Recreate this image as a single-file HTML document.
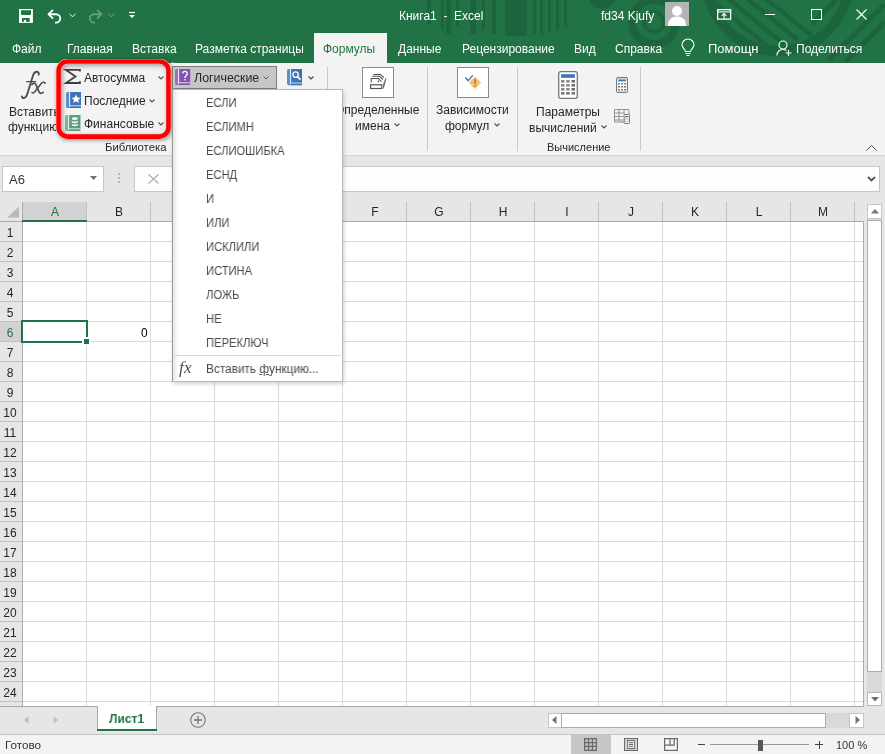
<!DOCTYPE html>
<html><head><meta charset="utf-8">
<style>
*{margin:0;padding:0;box-sizing:border-box}
html,body{width:885px;height:754px;overflow:hidden}
body{position:relative;font-family:"Liberation Sans",sans-serif;background:#fff;color:#262626}
.a{position:absolute;white-space:nowrap}
.t{position:absolute;white-space:nowrap;font-size:12px;line-height:12px;will-change:transform}
.w{color:#fff}
svg{position:absolute;overflow:visible}
</style></head><body>

<!-- TITLE BAR + TABS -->
<div class="a" style="left:0;top:0;width:885px;height:63px;background:#217346"></div>
<svg style="left:0;top:0" width="885" height="63" viewBox="0 0 885 63">
  <defs><clipPath id="cp"><rect x="0" y="0" width="885" height="63"/></clipPath><clipPath id="cp2"><circle cx="778" cy="-20" r="66"/></clipPath></defs>
  <g clip-path="url(#cp)" fill="#1c653c">
    <rect x="427" y="0" width="4" height="24"/>
    <rect x="441" y="0" width="3" height="30"/>
    <rect x="446" y="0" width="5" height="34"/>
    <rect x="456" y="0" width="3" height="26"/>
    <rect x="470" y="0" width="6" height="34"/>
    <rect x="482" y="0" width="3" height="30"/>
    <rect x="492" y="0" width="4" height="34"/>
    <rect x="505" y="0" width="22" height="36"/>
    <rect x="533" y="0" width="3" height="34"/>
    <rect x="540" y="0" width="3" height="34"/>
    <rect x="548" y="0" width="3" height="32"/>
    <rect x="556" y="0" width="3" height="30"/>
    <rect x="564" y="0" width="3" height="26"/>
    <circle cx="602" cy="-4" r="13"/>
  </g>
  <g clip-path="url(#cp)" fill="none" stroke="#1c653c">
    <circle cx="654" cy="22" r="10" stroke-width="4"/>
    <circle cx="654" cy="22" r="22" stroke-width="8"/>
    <circle cx="778" cy="-20" r="71" stroke-width="10"/>
    <path d="M836 0l-24 24M885 4l-56 56M885 22l-40 40" stroke-width="5"/>
  </g>
  <g clip-path="url(#cp2)" fill="none" stroke="#1c653c">
    <path d="M706 -4l64 52M720 -8l64 52M734 -12l64 52M748 -16l64 52" stroke-width="4.5"/>
  </g>
</svg>

<!-- QAT -->
<svg style="left:18px;top:8px" width="16" height="16" viewBox="0 0 16 16">
  <path d="M1 1h13.9v13.9H1z" fill="#fff"/>
  <path d="M3 2.3h10v3.9l-0.8 0.8H3.8L3 6.2z" fill="#217346"/>
  <rect x="4" y="10" width="7.7" height="3.9" fill="#217346"/>
  <rect x="5.9" y="11.9" width="2.3" height="2" fill="#fff"/>
</svg>
<svg style="left:47px;top:9px" width="16" height="14" viewBox="0 0 16 14">
  <path d="M6 0.8L1.6 5.2 6 9.6" fill="none" stroke="#fff" stroke-width="1.9"/>
  <path d="M1.6 5.2h7.4a4.2 4.2 0 0 1 0 8.4H8" fill="none" stroke="#fff" stroke-width="1.9"/>
</svg>
<svg style="left:69px;top:13px" width="7" height="5" viewBox="0 0 7 5"><path d="M0.5 0.8l3 3 3-3" fill="none" stroke="#fff" stroke-width="1"/></svg>
<svg style="left:87px;top:9px" width="16" height="14" viewBox="0 0 16 14" opacity="0.3">
  <path d="M10 0.8l4.4 4.4L10 9.6" fill="none" stroke="#fff" stroke-width="1.9"/>
  <path d="M14.4 5.2H7a4.2 4.2 0 0 0 0 8.4h1" fill="none" stroke="#fff" stroke-width="1.9"/>
</svg>
<svg style="left:108px;top:13px" width="7" height="5" viewBox="0 0 7 5" opacity="0.35"><path d="M0.5 0.8l3 3 3-3" fill="none" stroke="#fff" stroke-width="1"/></svg>
<svg style="left:128px;top:11px" width="8" height="9" viewBox="0 0 8 9"><path d="M1 1.5h6" stroke="#fff" stroke-width="1.2"/><path d="M1 4l3 3 3-3z" fill="#fff"/></svg>

<div class="t w" style="left:399px;top:10px">Книга1&nbsp;&nbsp;-&nbsp;&nbsp;Excel</div>
<div class="t w" style="left:601px;top:10px">fd34 Kjufy</div>
<div class="a" style="left:665px;top:2px;width:24px;height:24px;background:#b4b4b4"></div>
<svg style="left:665px;top:2px" width="24" height="24" viewBox="0 0 24 24">
  <circle cx="12" cy="9" r="5" fill="#fff"/>
  <path d="M3 24c0-7 4-9.5 9-9.5s9 2.5 9 9.5z" fill="#fff"/>
</svg>
<svg style="left:716.5px;top:9px" width="15" height="11" viewBox="0 0 15 11">
  <rect x="0.65" y="0.65" width="13" height="9.5" fill="none" stroke="#fff" stroke-width="1.3"/>
  <path d="M0.65 2.9h13" stroke="#fff" stroke-width="1.1"/>
  <path d="M7.1 10v-5.3M4.8 6.9l2.3-2.3 2.3 2.3" fill="none" stroke="#fff" stroke-width="1.1"/>
</svg>
<div class="a" style="left:765px;top:14px;width:10px;height:1px;background:#fff"></div>
<div class="a" style="left:811px;top:9px;width:10.5px;height:10.5px;border:1.3px solid #fff"></div>
<svg style="left:856px;top:9px" width="11" height="11" viewBox="0 0 11 11"><path d="M0.5 0.5l10 10M10.5 0.5l-10 10" stroke="#fff" stroke-width="1.1"/></svg>

<!-- tabs -->
<div class="a" style="left:314px;top:33px;width:73px;height:31px;background:#f3f3f3"></div>
<div class="t w" style="left:12px;top:43px">Файл</div>
<div class="t w" style="left:67px;top:43px">Главная</div>
<div class="t w" style="left:132px;top:43px">Вставка</div>
<div class="t w" style="left:195px;top:43px">Разметка страницы</div>
<div class="t" style="left:323px;top:43px;color:#217346">Формулы</div>
<div class="t w" style="left:398px;top:43px">Данные</div>
<div class="t w" style="left:462px;top:43px">Рецензирование</div>
<div class="t w" style="left:574px;top:43px">Вид</div>
<div class="t w" style="left:615px;top:43px">Справка</div>
<svg style="left:681px;top:40px" width="14" height="16" viewBox="0 0 14 16">
  <path d="M4.5 11.5c0-2-3.5-3.5-3.5-6.5a6 6 0 0 1 12 0c0 3-3.5 4.5-3.5 6.5z" fill="none" stroke="#fff" stroke-width="1.1"/>
  <path d="M4.5 13.5h5M5.5 15.5h3" stroke="#fff" stroke-width="1.1"/>
</svg>
<div class="t w" style="left:708px;top:43px;transform:scaleX(1.08);transform-origin:0 0">Помощн</div>
<svg style="left:776px;top:40px" width="17" height="16" viewBox="0 0 17 16">
  <circle cx="7" cy="5" r="4" fill="none" stroke="#fff" stroke-width="1.1"/>
  <path d="M0.8 15.5c0.5-4 3-6 6.2-6 1.5 0 2.6 0.4 3.5 1" fill="none" stroke="#fff" stroke-width="1.1"/>
  <path d="M12.5 10v6M9.5 13h6" stroke="#fff" stroke-width="1.1"/>
</svg>
<div class="t w" style="left:796px;top:43px">Поделиться</div>

<!-- RIBBON -->
<div class="a" style="left:0;top:63px;width:885px;height:92px;background:#f3f3f3"></div>
<div class="a" style="left:0;top:155px;width:885px;height:1px;background:#d4d4d4"></div>


<!-- Insert function -->
<svg style="left:0;top:60px" width="60" height="45" viewBox="0 60 60 45">
  <g fill="none" stroke="#505050" stroke-linecap="round">
    <path d="M38.8 74.6c0.2-1.8-0.8-3.1-2.4-2.9-1.6 0.2-2.7 1.6-3.4 3.8L27.6 93c-0.8 2.8-2 4.9-3.8 5-1.2 0.1-1.9-0.5-1.9-1.5" stroke-width="1.9"/>
    <path d="M26.6 81.6h9" stroke-width="1.3"/>
    <path d="M32 84.6c1-1.6 2.5-2 3.4-0.8 1.3 1.9 2.5 6.2 3.9 8.5 0.8 1.3 2.3 1.4 3.8 0.1" stroke-width="1.8"/>
    <path d="M45.2 83.1c-1.2-1.2-2.9-1-4 0.4l-6.6 8.6c-0.9 1.1-2 1.2-2.6 0.5" stroke-width="1.6"/>
  </g>
</svg>
<div class="t" style="left:9px;top:106px">Вставить</div>
<div class="t" style="left:8px;top:121px">функцию</div>

<!-- Red highlight box -->
<div class="a" style="left:56.3px;top:59.2px;width:114.5px;height:79.7px;border-radius:11px;box-shadow:1px 1px 4px rgba(0,0,0,0.45);background:#f3f3f3"></div>
<div class="a" style="left:60.6px;top:63.5px;width:106px;height:71px;border-radius:7px;box-shadow:inset 1px 1px 4px 1px rgba(0,0,0,0.33)"></div>
<svg style="left:0;top:0" width="200" height="150" viewBox="0 0 200 150"><rect x="58.6" y="61.5" width="109.9" height="75.1" rx="9" fill="none" stroke="#ff0000" stroke-width="4.6"/></svg>
<div class="a" style="left:172px;top:62px;width:1px;height:27px;background:#dcdcdc"></div>
<!-- Sigma -->
<svg style="left:65px;top:69px" width="16" height="15" viewBox="0 0 16 15">
  <path d="M14.9 2.6V0.9H0.9l9.6 6.5-9.6 6.6h14v-1.7" fill="none" stroke="#404040" stroke-width="1.8" stroke-linejoin="miter"/>
</svg>
<div class="t" style="left:84px;top:72px">Автосумма</div>
<svg style="left:158px;top:76px" width="6" height="4" viewBox="0 0 6 4"><path d="M0.5 0.5l2.5 2.5 2.5-2.5" fill="none" stroke="#505050" stroke-width="1.1"/></svg>
<!-- blue book star -->
<svg style="left:66px;top:91.8px" width="15" height="16" viewBox="0 0 15 16">
  <path d="M1.6 0H15V16H1.6A1.6 1.6 0 0 1 0 14.4V1.6A1.6 1.6 0 0 1 1.6 0z" fill="#5a8fd0"/>
  <rect x="4.1000000000000005" y="0" width="10.9" height="13.5" fill="#3f73b6"/>
  <rect x="3.2" y="0" width="0.9" height="14.4" fill="#fff"/>
  <rect x="3.2" y="13.5" width="11.8" height="0.9" fill="#fff"/>
  <rect x="4.1000000000000005" y="14.4" width="10.9" height="1.6" fill="#3f73b6"/>
  <path d="M10.1 2.6l1.35 2.85 3.1.35-2.3 2.1.65 3.05-2.8-1.6-2.8 1.6.65-3.05-2.3-2.1 3.1-.35z" fill="#fff"/>
</svg>
<div class="t" style="left:84px;top:95px">Последние</div>
<svg style="left:149px;top:99px" width="6" height="4" viewBox="0 0 6 4"><path d="M0.5 0.5l2.5 2.5 2.5-2.5" fill="none" stroke="#505050" stroke-width="1.1"/></svg>
<!-- green book coins -->
<svg style="left:65.2px;top:115px" width="15.3" height="16" viewBox="0 0 15.3 16">
  <path d="M1.6 0H15.3V16H1.6A1.6 1.6 0 0 1 0 14.4V1.6A1.6 1.6 0 0 1 1.6 0z" fill="#7db598"/>
  <rect x="4.1000000000000005" y="0" width="11.200000000000001" height="13.5" fill="#5a9c7c"/>
  <rect x="3.2" y="0" width="0.9" height="14.4" fill="#fff"/>
  <rect x="3.2" y="13.5" width="12.100000000000001" height="0.9" fill="#fff"/>
  <rect x="4.1000000000000005" y="14.4" width="11.200000000000001" height="1.6" fill="#5a9c7c"/>
  <ellipse cx="9.8" cy="3.6" rx="3.1" ry="1.4" fill="#fff"/>
  <path d="M6.7 5.2a3.1 1.4 0 0 0 6.2 0v1.6a3.1 1.4 0 0 1-6.2 0z" fill="#fff"/>
  <path d="M6.7 8.2a3.1 1.4 0 0 0 6.2 0v1.6a3.1 1.4 0 0 1-6.2 0z" fill="#fff"/>
</svg>
<div class="t" style="left:84px;top:118px">Финансовые</div>
<svg style="left:158px;top:122px" width="6" height="4" viewBox="0 0 6 4"><path d="M0.5 0.5l2.5 2.5 2.5-2.5" fill="none" stroke="#505050" stroke-width="1.1"/></svg>
<div class="t" style="left:105px;top:141px;font-size:11.3px">Библиотека</div>

<!-- Logical button pressed -->
<div class="a" style="left:172px;top:66px;width:105px;height:23px;background:#c6c6c6;border:1px solid #7c7c7c"></div>
<svg style="left:175px;top:68.8px" width="15.1" height="16" viewBox="0 0 15.1 16">
  <path d="M1.6 0H15.1V16H1.6A1.6 1.6 0 0 1 0 14.4V1.6A1.6 1.6 0 0 1 1.6 0z" fill="#9d6fc7"/>
  <rect x="4.1000000000000005" y="0" width="10.999999999999998" height="13.5" fill="#8653b3"/>
  <rect x="3.2" y="0" width="0.9" height="14.4" fill="#fff"/>
  <rect x="3.2" y="13.5" width="11.899999999999999" height="0.9" fill="#fff"/>
  <rect x="4.1000000000000005" y="14.4" width="10.999999999999998" height="1.6" fill="#8653b3"/>
  <path d="M7.6 4.6a2.3 2.3 0 1 1 3.6 1.9c-.8.6-1.2 1-1.2 2v.6" fill="none" stroke="#fff" stroke-width="1.3"/><rect x="9.3" y="10" width="1.4" height="1.4" fill="#fff"/>
</svg>
<div class="t" style="left:194px;top:72px;font-size:12.4px">Логические</div>
<svg style="left:263px;top:76px" width="6" height="4" viewBox="0 0 6 4"><path d="M0.5 0.5l2.5 2.5 2.5-2.5" fill="none" stroke="#555" stroke-width="1"/></svg>
<!-- lookup icon -->
<svg style="left:287px;top:68.8px" width="15" height="16.2" viewBox="0 0 15 16.2">
  <path d="M1.6 0H15V16.2H1.6A1.6 1.6 0 0 1 0 14.6V1.6A1.6 1.6 0 0 1 1.6 0z" fill="#5a8fd0"/>
  <rect x="4.1000000000000005" y="0" width="10.9" height="13.7" fill="#3f73b6"/>
  <rect x="3.2" y="0" width="0.9" height="14.6" fill="#fff"/>
  <rect x="3.2" y="13.7" width="11.8" height="0.9" fill="#fff"/>
  <rect x="4.1000000000000005" y="14.6" width="10.9" height="1.6" fill="#3f73b6"/>
  <circle cx="8.6" cy="5.6" r="2.7" fill="none" stroke="#fff" stroke-width="1.3"/><path d="M10.5 7.6l3 3" stroke="#fff" stroke-width="1.6"/>
</svg>
<svg style="left:308px;top:75.5px" width="6" height="4" viewBox="0 0 6 4"><path d="M0.5 0.5l2.5 2.5 2.5-2.5" fill="none" stroke="#444" stroke-width="1.1"/></svg>
<div class="a" style="left:327px;top:67px;width:1px;height:84px;background:#c8c8c8"></div>

<!-- Defined names -->
<div class="a" style="left:362px;top:67px;width:32px;height:31px;background:#fff;border:1px solid #8a8a8a"></div>
<svg style="left:362px;top:67px" width="32" height="31" viewBox="0 0 32 31">
  <rect x="8.6" y="17.8" width="11.2" height="3.7" fill="none" stroke="#555" stroke-width="1.2"/>
  <path d="M11.3 7.5h7.2l3.4 3.2M10.3 9.3h7.1l3.5 3.2M9.2 15.4v-3.9h7.2l3.1 3.1" fill="none" stroke="#555" stroke-width="1.1"/>
  <circle cx="16.4" cy="14.4" r="0.8" fill="#555"/>
  <path d="M23.9 11.2l-1.3 6.2-1.3 4 0.3-4.2z" fill="#5a5a5a" stroke="#5a5a5a" stroke-width="0.6"/>
</svg>
<div class="t" style="left:335px;top:104px">Определенные</div>
<div class="t" style="left:355px;top:120px">имена</div>
<svg style="left:394px;top:123px" width="6" height="4" viewBox="0 0 6 4"><path d="M0.5 0.5l2.5 2.5 2.5-2.5" fill="none" stroke="#505050" stroke-width="1.1"/></svg>
<div class="a" style="left:427px;top:67px;width:1px;height:84px;background:#c8c8c8"></div>

<!-- Formula auditing -->
<div class="a" style="left:457px;top:67px;width:32px;height:31px;background:#fff;border:1px solid #8a8a8a"></div>
<svg style="left:457px;top:67px" width="32" height="31" viewBox="0 0 32 31">
  <path d="M8.3 10.6l2.9 3 4.6-5.2" fill="none" stroke="#3e73b6" stroke-width="1.4"/>
  <path d="M18 10.5l5.2 5.2-5.2 5.2-5.2-5.2z" fill="#efc677" stroke="#efc677" stroke-width="1.5" stroke-linejoin="round"/>
  <rect x="17.3" y="12" width="1.5" height="5" fill="#e05a3a"/>
  <rect x="17.3" y="18.2" width="1.5" height="1.4" fill="#e05a3a"/>
</svg>
<div class="t" style="left:436px;top:104px">Зависимости</div>
<div class="t" style="left:445px;top:120px">формул</div>
<svg style="left:494px;top:123px" width="6" height="4" viewBox="0 0 6 4"><path d="M0.5 0.5l2.5 2.5 2.5-2.5" fill="none" stroke="#505050" stroke-width="1.1"/></svg>
<div class="a" style="left:517px;top:67px;width:1px;height:84px;background:#c8c8c8"></div>

<!-- Calculation -->
<svg style="left:558px;top:71px" width="20" height="28" viewBox="0 0 20 28">
  <rect x="0.7" y="0.7" width="18.6" height="26.6" rx="2" fill="#fff" stroke="#777" stroke-width="1.3"/>
  <rect x="3" y="3.2" width="14" height="3.6" fill="#3f73b6"/>
  <g fill="#8c8c8c">
   <rect x="3" y="9" width="3.5" height="2.6"/><rect x="8.2" y="9" width="3.5" height="2.6"/><rect x="13.5" y="9" width="3.5" height="2.6" fill="#6e6e6e"/>
   <rect x="3" y="13" width="3.5" height="2.6"/><rect x="8.2" y="13" width="3.5" height="2.6"/><rect x="13.5" y="13" width="3.5" height="2.6" fill="#6e6e6e"/>
   <rect x="3" y="17" width="3.5" height="2.6"/><rect x="8.2" y="17" width="3.5" height="2.6"/><rect x="13.5" y="17" width="3.5" height="2.6" fill="#6e6e6e"/>
   <rect x="3" y="21" width="3.5" height="2.6" fill="#777"/><rect x="8.2" y="21" width="3.5" height="2.6" fill="#777"/><rect x="13.5" y="21" width="3.5" height="2.6" fill="#777"/>
  </g>
</svg>
<div class="t" style="left:536px;top:106px">Параметры</div>
<div class="t" style="left:528.5px;top:122px">вычислений</div>
<svg style="left:601px;top:125px" width="6" height="4" viewBox="0 0 6 4"><path d="M0.5 0.5l2.5 2.5 2.5-2.5" fill="none" stroke="#505050" stroke-width="1.1"/></svg>
<svg style="left:616px;top:77px" width="12" height="16" viewBox="0 0 12 16">
  <rect x="0.6" y="0.6" width="10.8" height="14.8" rx="1.5" fill="#fff" stroke="#777" stroke-width="1.1"/>
  <rect x="2.2" y="2.4" width="7.6" height="2" fill="#3f73b6"/>
  <g fill="#666"><rect x="2.2" y="6" width="1.6" height="1.6"/><rect x="5.2" y="6" width="1.6" height="1.6"/><rect x="8.2" y="6" width="1.6" height="1.6"/>
  <rect x="2.2" y="9" width="1.6" height="1.6"/><rect x="5.2" y="9" width="1.6" height="1.6"/><rect x="8.2" y="9" width="1.6" height="1.6"/>
  <rect x="2.2" y="12" width="1.6" height="1.6"/><rect x="5.2" y="12" width="1.6" height="1.6"/><rect x="8.2" y="12" width="1.6" height="1.6"/></g>
</svg>
<svg style="left:614px;top:109px" width="16" height="15" viewBox="0 0 16 15">
  <path d="M0.5 0.5h14.5v5M0.5 0.5v12.5h9M0.5 4h10M0.5 7.5h9M0.5 11h9M5 0.5v12M10 0.5v5" fill="none" stroke="#888" stroke-width="0.9"/>
  <path d="M7.5 12.5l1.5 1.5" stroke="#888" stroke-width="0.9"/>
  <rect x="10.2" y="5.5" width="5.3" height="9" rx="0.8" fill="#fff" stroke="#777" stroke-width="1"/>
  <rect x="11.4" y="7" width="3" height="1.3" fill="#3f73b6"/>
  <g fill="#777"><rect x="11.4" y="9.5" width="1" height="1"/><rect x="13.4" y="9.5" width="1" height="1"/><rect x="11.4" y="11.8" width="1" height="1"/><rect x="13.4" y="11.8" width="1" height="1"/></g>
</svg>
<div class="t" style="left:546.5px;top:141px;font-size:11px">Вычисление</div>
<div class="a" style="left:640px;top:67px;width:1px;height:84px;background:#c8c8c8"></div>
<svg style="left:866px;top:145px" width="11" height="6" viewBox="0 0 11 6"><path d="M0.5 5.5l5-5 5 5" fill="none" stroke="#555" stroke-width="1"/></svg>


<!-- FORMULA BAR -->
<div class="a" style="left:0;top:156px;width:885px;height:46px;background:#e6e6e6"></div>
<div class="a" style="left:2px;top:166px;width:102px;height:26px;background:#fff;border:1px solid #c6c6c6"></div>
<div class="t" style="left:8.5px;top:173px;font-size:13px;line-height:13px;color:#333">A6</div>
<svg style="left:90.3px;top:176.4px" width="7" height="4" viewBox="0 0 7 4"><path d="M0 0h7L3.5 4z" fill="#707070"/></svg>
<div class="a" style="left:118px;top:173px;width:2px;height:2px;background:#b4b4b4"></div>
<div class="a" style="left:118px;top:177px;width:2px;height:2px;background:#b4b4b4"></div>
<div class="a" style="left:118px;top:181px;width:2px;height:2px;background:#b4b4b4"></div>
<div class="a" style="left:134px;top:166px;width:746px;height:26px;background:#fdfdfd;border:1px solid #c6c6c6"></div>
<svg style="left:148px;top:174px" width="11" height="10" viewBox="0 0 11 10"><path d="M0.5 0.5l10 9M10.5 0.5l-10 9" stroke="#b0b0b0" stroke-width="1.2"/></svg>
<svg style="left:867px;top:176px" width="9" height="6" viewBox="0 0 9 6"><path d="M1 1l3.5 3.5L8 1" fill="none" stroke="#555" stroke-width="1.8"/></svg>


<!-- GRID -->
<div class="a" style="left:0;top:202px;width:885px;height:504px;background:#fff"></div>
<div class="a" style="left:0;top:202px;width:885px;height:19px;background:#e6e6e6"></div>
<div class="a" style="left:0;top:221px;width:22px;height:485px;background:#e6e6e6"></div>
<div class="a" style="left:863px;top:202px;width:22px;height:504px;background:#e6e6e6"></div>
<div class="a" style="left:22px;top:202px;width:65px;height:19px;background:#d2d2d2"></div>
<div class="a" style="left:0;top:321px;width:22px;height:21px;background:#d2d2d2"></div>
<svg style="left:7px;top:206px" width="13" height="12" viewBox="0 0 13 12"><path d="M12 0.5V11.5H0.5z" fill="#b8b8b8"/></svg>
<div class="a" style="left:86px;top:221px;width:1px;height:485px;background:#d9d9d9"></div>
<div class="a" style="left:86px;top:202px;width:1px;height:19px;background:#c0c0c0"></div>
<div class="a" style="left:150px;top:221px;width:1px;height:485px;background:#d9d9d9"></div>
<div class="a" style="left:150px;top:202px;width:1px;height:19px;background:#c0c0c0"></div>
<div class="a" style="left:214px;top:221px;width:1px;height:485px;background:#d9d9d9"></div>
<div class="a" style="left:214px;top:202px;width:1px;height:19px;background:#c0c0c0"></div>
<div class="a" style="left:278px;top:221px;width:1px;height:485px;background:#d9d9d9"></div>
<div class="a" style="left:278px;top:202px;width:1px;height:19px;background:#c0c0c0"></div>
<div class="a" style="left:342px;top:221px;width:1px;height:485px;background:#d9d9d9"></div>
<div class="a" style="left:342px;top:202px;width:1px;height:19px;background:#c0c0c0"></div>
<div class="a" style="left:406px;top:221px;width:1px;height:485px;background:#d9d9d9"></div>
<div class="a" style="left:406px;top:202px;width:1px;height:19px;background:#c0c0c0"></div>
<div class="a" style="left:470px;top:221px;width:1px;height:485px;background:#d9d9d9"></div>
<div class="a" style="left:470px;top:202px;width:1px;height:19px;background:#c0c0c0"></div>
<div class="a" style="left:534px;top:221px;width:1px;height:485px;background:#d9d9d9"></div>
<div class="a" style="left:534px;top:202px;width:1px;height:19px;background:#c0c0c0"></div>
<div class="a" style="left:598px;top:221px;width:1px;height:485px;background:#d9d9d9"></div>
<div class="a" style="left:598px;top:202px;width:1px;height:19px;background:#c0c0c0"></div>
<div class="a" style="left:662px;top:221px;width:1px;height:485px;background:#d9d9d9"></div>
<div class="a" style="left:662px;top:202px;width:1px;height:19px;background:#c0c0c0"></div>
<div class="a" style="left:726px;top:221px;width:1px;height:485px;background:#d9d9d9"></div>
<div class="a" style="left:726px;top:202px;width:1px;height:19px;background:#c0c0c0"></div>
<div class="a" style="left:790px;top:221px;width:1px;height:485px;background:#d9d9d9"></div>
<div class="a" style="left:790px;top:202px;width:1px;height:19px;background:#c0c0c0"></div>
<div class="a" style="left:854px;top:221px;width:1px;height:485px;background:#d9d9d9"></div>
<div class="a" style="left:854px;top:202px;width:1px;height:19px;background:#c0c0c0"></div>
<div class="a" style="left:22px;top:241px;width:841px;height:1px;background:#d9d9d9"></div>
<div class="a" style="left:0;top:241px;width:22px;height:1px;background:#c0c0c0"></div>
<div class="a" style="left:22px;top:261px;width:841px;height:1px;background:#d9d9d9"></div>
<div class="a" style="left:0;top:261px;width:22px;height:1px;background:#c0c0c0"></div>
<div class="a" style="left:22px;top:281px;width:841px;height:1px;background:#d9d9d9"></div>
<div class="a" style="left:0;top:281px;width:22px;height:1px;background:#c0c0c0"></div>
<div class="a" style="left:22px;top:301px;width:841px;height:1px;background:#d9d9d9"></div>
<div class="a" style="left:0;top:301px;width:22px;height:1px;background:#c0c0c0"></div>
<div class="a" style="left:22px;top:321px;width:841px;height:1px;background:#d9d9d9"></div>
<div class="a" style="left:0;top:321px;width:22px;height:1px;background:#c0c0c0"></div>
<div class="a" style="left:22px;top:341px;width:841px;height:1px;background:#d9d9d9"></div>
<div class="a" style="left:0;top:341px;width:22px;height:1px;background:#c0c0c0"></div>
<div class="a" style="left:22px;top:361px;width:841px;height:1px;background:#d9d9d9"></div>
<div class="a" style="left:0;top:361px;width:22px;height:1px;background:#c0c0c0"></div>
<div class="a" style="left:22px;top:381px;width:841px;height:1px;background:#d9d9d9"></div>
<div class="a" style="left:0;top:381px;width:22px;height:1px;background:#c0c0c0"></div>
<div class="a" style="left:22px;top:401px;width:841px;height:1px;background:#d9d9d9"></div>
<div class="a" style="left:0;top:401px;width:22px;height:1px;background:#c0c0c0"></div>
<div class="a" style="left:22px;top:421px;width:841px;height:1px;background:#d9d9d9"></div>
<div class="a" style="left:0;top:421px;width:22px;height:1px;background:#c0c0c0"></div>
<div class="a" style="left:22px;top:441px;width:841px;height:1px;background:#d9d9d9"></div>
<div class="a" style="left:0;top:441px;width:22px;height:1px;background:#c0c0c0"></div>
<div class="a" style="left:22px;top:461px;width:841px;height:1px;background:#d9d9d9"></div>
<div class="a" style="left:0;top:461px;width:22px;height:1px;background:#c0c0c0"></div>
<div class="a" style="left:22px;top:481px;width:841px;height:1px;background:#d9d9d9"></div>
<div class="a" style="left:0;top:481px;width:22px;height:1px;background:#c0c0c0"></div>
<div class="a" style="left:22px;top:501px;width:841px;height:1px;background:#d9d9d9"></div>
<div class="a" style="left:0;top:501px;width:22px;height:1px;background:#c0c0c0"></div>
<div class="a" style="left:22px;top:521px;width:841px;height:1px;background:#d9d9d9"></div>
<div class="a" style="left:0;top:521px;width:22px;height:1px;background:#c0c0c0"></div>
<div class="a" style="left:22px;top:541px;width:841px;height:1px;background:#d9d9d9"></div>
<div class="a" style="left:0;top:541px;width:22px;height:1px;background:#c0c0c0"></div>
<div class="a" style="left:22px;top:561px;width:841px;height:1px;background:#d9d9d9"></div>
<div class="a" style="left:0;top:561px;width:22px;height:1px;background:#c0c0c0"></div>
<div class="a" style="left:22px;top:581px;width:841px;height:1px;background:#d9d9d9"></div>
<div class="a" style="left:0;top:581px;width:22px;height:1px;background:#c0c0c0"></div>
<div class="a" style="left:22px;top:601px;width:841px;height:1px;background:#d9d9d9"></div>
<div class="a" style="left:0;top:601px;width:22px;height:1px;background:#c0c0c0"></div>
<div class="a" style="left:22px;top:621px;width:841px;height:1px;background:#d9d9d9"></div>
<div class="a" style="left:0;top:621px;width:22px;height:1px;background:#c0c0c0"></div>
<div class="a" style="left:22px;top:641px;width:841px;height:1px;background:#d9d9d9"></div>
<div class="a" style="left:0;top:641px;width:22px;height:1px;background:#c0c0c0"></div>
<div class="a" style="left:22px;top:661px;width:841px;height:1px;background:#d9d9d9"></div>
<div class="a" style="left:0;top:661px;width:22px;height:1px;background:#c0c0c0"></div>
<div class="a" style="left:22px;top:681px;width:841px;height:1px;background:#d9d9d9"></div>
<div class="a" style="left:0;top:681px;width:22px;height:1px;background:#c0c0c0"></div>
<div class="a" style="left:22px;top:701px;width:841px;height:1px;background:#d9d9d9"></div>
<div class="a" style="left:0;top:701px;width:22px;height:1px;background:#c0c0c0"></div>
<div class="a" style="left:0;top:221px;width:863px;height:1px;background:#ababab"></div>
<div class="a" style="left:22px;top:202px;width:1px;height:504px;background:#ababab"></div>
<div class="a" style="left:863px;top:221px;width:1px;height:485px;background:#ababab"></div>
<div class="a" style="left:22px;top:220px;width:65px;height:2px;background:#217346"></div>
<div class="t" style="left:35px;top:206px;width:40px;text-align:center;color:#217346">A</div>
<div class="t" style="left:99px;top:206px;width:40px;text-align:center;color:#262626">B</div>
<div class="t" style="left:163px;top:206px;width:40px;text-align:center;color:#262626">C</div>
<div class="t" style="left:227px;top:206px;width:40px;text-align:center;color:#262626">D</div>
<div class="t" style="left:291px;top:206px;width:40px;text-align:center;color:#262626">E</div>
<div class="t" style="left:355px;top:206px;width:40px;text-align:center;color:#262626">F</div>
<div class="t" style="left:419px;top:206px;width:40px;text-align:center;color:#262626">G</div>
<div class="t" style="left:483px;top:206px;width:40px;text-align:center;color:#262626">H</div>
<div class="t" style="left:547px;top:206px;width:40px;text-align:center;color:#262626">I</div>
<div class="t" style="left:611px;top:206px;width:40px;text-align:center;color:#262626">J</div>
<div class="t" style="left:675px;top:206px;width:40px;text-align:center;color:#262626">K</div>
<div class="t" style="left:739px;top:206px;width:40px;text-align:center;color:#262626">L</div>
<div class="t" style="left:803px;top:206px;width:40px;text-align:center;color:#262626">M</div>
<div class="t" style="left:-1px;top:227px;width:22px;text-align:center;color:#262626">1</div>
<div class="t" style="left:-1px;top:247px;width:22px;text-align:center;color:#262626">2</div>
<div class="t" style="left:-1px;top:267px;width:22px;text-align:center;color:#262626">3</div>
<div class="t" style="left:-1px;top:287px;width:22px;text-align:center;color:#262626">4</div>
<div class="t" style="left:-1px;top:307px;width:22px;text-align:center;color:#262626">5</div>
<div class="t" style="left:-1px;top:327px;width:22px;text-align:center;color:#217346">6</div>
<div class="t" style="left:-1px;top:347px;width:22px;text-align:center;color:#262626">7</div>
<div class="t" style="left:-1px;top:367px;width:22px;text-align:center;color:#262626">8</div>
<div class="t" style="left:-1px;top:387px;width:22px;text-align:center;color:#262626">9</div>
<div class="t" style="left:-1px;top:407px;width:22px;text-align:center;color:#262626">10</div>
<div class="t" style="left:-1px;top:427px;width:22px;text-align:center;color:#262626">11</div>
<div class="t" style="left:-1px;top:447px;width:22px;text-align:center;color:#262626">12</div>
<div class="t" style="left:-1px;top:467px;width:22px;text-align:center;color:#262626">13</div>
<div class="t" style="left:-1px;top:487px;width:22px;text-align:center;color:#262626">14</div>
<div class="t" style="left:-1px;top:507px;width:22px;text-align:center;color:#262626">15</div>
<div class="t" style="left:-1px;top:527px;width:22px;text-align:center;color:#262626">16</div>
<div class="t" style="left:-1px;top:547px;width:22px;text-align:center;color:#262626">17</div>
<div class="t" style="left:-1px;top:567px;width:22px;text-align:center;color:#262626">18</div>
<div class="t" style="left:-1px;top:587px;width:22px;text-align:center;color:#262626">19</div>
<div class="t" style="left:-1px;top:607px;width:22px;text-align:center;color:#262626">20</div>
<div class="t" style="left:-1px;top:627px;width:22px;text-align:center;color:#262626">21</div>
<div class="t" style="left:-1px;top:647px;width:22px;text-align:center;color:#262626">22</div>
<div class="t" style="left:-1px;top:667px;width:22px;text-align:center;color:#262626">23</div>
<div class="t" style="left:-1px;top:687px;width:22px;text-align:center;color:#262626">24</div>
<div class="a" style="left:21px;top:320px;width:67px;height:23px;border:2px solid #217346"></div>
<div class="a" style="left:82px;top:337px;width:8px;height:8px;background:#fff"></div>
<div class="a" style="left:84px;top:339px;width:5px;height:5px;background:#217346"></div>
<div class="t" style="left:141px;top:327px;color:#000">0</div>
<div class="a" style="left:867px;top:204px;width:15px;height:15px;background:#fff;border:1px solid #c6c6c6"></div>
<svg style="left:871px;top:209px" width="8" height="5" viewBox="0 0 8 5"><path d="M0 4.5h8L4 0z" fill="#777"/></svg>
<div class="a" style="left:867px;top:219px;width:15px;height:474px;background:#d9d9d9"></div>
<div class="a" style="left:867px;top:220px;width:15px;height:452px;background:#fff;border:1px solid #ababab"></div>
<div class="a" style="left:867px;top:692px;width:15px;height:14px;background:#fff;border:1px solid #b8b8b8"></div>
<svg style="left:871px;top:697px" width="8" height="5" viewBox="0 0 8 5"><path d="M0 0h8L4 4.5z" fill="#707070"/></svg>

<!-- SHEET TABS -->
<div class="a" style="left:0;top:706px;width:885px;height:28px;background:#e6e6e6"></div>
<div class="a" style="left:0;top:706px;width:97px;height:1px;background:#a8a8a8"></div>
<div class="a" style="left:157px;top:706px;width:707px;height:1px;background:#a8a8a8"></div>
<svg style="left:24px;top:716px" width="5" height="8" viewBox="0 0 5 8"><path d="M4.5 0v8L0 4z" fill="#c0c0c0"/></svg>
<svg style="left:53px;top:716px" width="5" height="8" viewBox="0 0 5 8"><path d="M0.5 0v8L5 4z" fill="#c0c0c0"/></svg>
<div class="a" style="left:97px;top:706px;width:60px;height:25px;background:#fff;border-left:1px solid #a8a8a8;border-right:1px solid #a8a8a8"></div>
<div class="a" style="left:97px;top:729px;width:60px;height:2px;background:#217346"></div>
<div class="t" style="left:109px;top:712px;font-size:13.5px;line-height:13.5px;font-weight:bold;color:#217346;transform:scaleX(0.89);transform-origin:0 0">Лист1</div>
<svg style="left:190px;top:712px" width="16" height="16" viewBox="0 0 16 16"><circle cx="8" cy="8" r="7.3" fill="none" stroke="#777" stroke-width="1.1"/><path d="M8 4v8M4 8h8" stroke="#777" stroke-width="1.3"/></svg>
<div class="a" style="left:548px;top:713px;width:14px;height:15px;background:#fff;border:1px solid #c6c6c6"></div>
<svg style="left:552px;top:716px" width="5" height="8" viewBox="0 0 5 8"><path d="M4.5 0v8L0 4z" fill="#707070"/></svg>
<div class="a" style="left:562px;top:713px;width:287px;height:15px;background:#d9d9d9"></div>
<div class="a" style="left:561px;top:713px;width:265px;height:15px;background:#fff;border:1px solid #ababab"></div>
<div class="a" style="left:849px;top:713px;width:15px;height:15px;background:#fff;border:1px solid #c6c6c6"></div>
<svg style="left:855px;top:716px" width="5" height="8" viewBox="0 0 5 8"><path d="M0.5 0v8L5 4z" fill="#707070"/></svg>

<!-- STATUS BAR -->
<div class="a" style="left:0;top:734px;width:885px;height:20px;background:#f3f3f3;border-top:1px solid #c4c4c4"></div>
<div class="t" style="left:5px;top:739px;font-size:11.7px;color:#333">Готово</div>
<div class="a" style="left:571px;top:734.5px;width:40px;height:20px;background:#c6c6c6"></div>
<svg style="left:584px;top:738px" width="13" height="13" viewBox="0 0 13 13"><path d="M0.65 0.65h11.7v11.7H0.65zM0.65 4.55h11.7M0.65 8.45h11.7M4.55 0.65v11.7M8.45 0.65v11.7" fill="none" stroke="#6a6a6a" stroke-width="1.3"/></svg>
<svg style="left:624px;top:738px" width="14" height="13" viewBox="0 0 14 13"><rect x="0.6" y="0.6" width="12.8" height="11.8" fill="none" stroke="#6a6a6a" stroke-width="1.2"/><rect x="3.3" y="2.5" width="7.4" height="8" fill="none" stroke="#6a6a6a" stroke-width="1.1"/><path d="M4.8 4.7h4.4M4.8 6.5h4.4M4.8 8.3h4.4" stroke="#6a6a6a" stroke-width="1"/></svg>
<svg style="left:664px;top:738px" width="14" height="13" viewBox="0 0 14 13"><rect x="0.6" y="0.6" width="12.8" height="11.8" fill="none" stroke="#6a6a6a" stroke-width="1.2"/><path d="M0.6 7.2H10.2V0.6M6 0.6v6.6" fill="none" stroke="#6a6a6a" stroke-width="1.2"/></svg>
<div class="a" style="left:698px;top:744px;width:7px;height:1px;background:#444"></div>
<div class="a" style="left:710px;top:744px;width:99px;height:1px;background:#999"></div>
<div class="a" style="left:758px;top:740px;width:5px;height:11px;background:#555"></div>
<div class="a" style="left:815px;top:744px;width:8px;height:1px;background:#444"></div>
<div class="a" style="left:818.5px;top:740.5px;width:1px;height:8px;background:#444"></div>
<div class="t" style="left:836px;top:739px;font-size:11px;color:#333">100 %</div>


<!-- DROPDOWN -->
<div class="a" style="left:172px;top:89px;width:171px;height:293px;background:#fff;border:1px solid #b8b8b8;border-left-color:#9a9a9a;box-shadow:1px 2px 4px rgba(0,0,0,0.18)"></div>
<div class="a" style="left:173px;top:90px;width:6px;height:290px;background:linear-gradient(to right,rgba(0,0,0,0.10),rgba(0,0,0,0))"></div>
<div class="t" style="left:206px;top:97px;font-size:12px;color:#4a4a4a;transform:scaleX(0.93);transform-origin:0 0">ЕСЛИ</div>
<div class="t" style="left:206px;top:121px;font-size:12px;color:#4a4a4a;transform:scaleX(0.93);transform-origin:0 0">ЕСЛИМН</div>
<div class="t" style="left:206px;top:145px;font-size:12px;color:#4a4a4a;transform:scaleX(0.93);transform-origin:0 0">ЕСЛИОШИБКА</div>
<div class="t" style="left:206px;top:169px;font-size:12px;color:#4a4a4a;transform:scaleX(0.93);transform-origin:0 0">ЕСНД</div>
<div class="t" style="left:206px;top:193px;font-size:12px;color:#4a4a4a;transform:scaleX(0.93);transform-origin:0 0">И</div>
<div class="t" style="left:206px;top:217px;font-size:12px;color:#4a4a4a;transform:scaleX(0.93);transform-origin:0 0">ИЛИ</div>
<div class="t" style="left:206px;top:241px;font-size:12px;color:#4a4a4a;transform:scaleX(0.93);transform-origin:0 0">ИСКЛИЛИ</div>
<div class="t" style="left:206px;top:265px;font-size:12px;color:#4a4a4a;transform:scaleX(0.93);transform-origin:0 0">ИСТИНА</div>
<div class="t" style="left:206px;top:289px;font-size:12px;color:#4a4a4a;transform:scaleX(0.93);transform-origin:0 0">ЛОЖЬ</div>
<div class="t" style="left:206px;top:313px;font-size:12px;color:#4a4a4a;transform:scaleX(0.93);transform-origin:0 0">НЕ</div>
<div class="t" style="left:206px;top:337px;font-size:12px;color:#4a4a4a;transform:scaleX(0.93);transform-origin:0 0">ПЕРЕКЛЮЧ</div>
<div class="a" style="left:174px;top:355px;width:167px;height:1px;background:#d8d8d8"></div>
<div class="a" style="left:178.8px;top:357px;font-family:'Liberation Serif',serif;font-style:italic;font-size:17px;line-height:22px;color:#505050;letter-spacing:0.3px;will-change:transform">fx</div>
<div class="t" style="left:206px;top:363px;font-size:12px;color:#4a4a4a;transform:scaleX(0.985);transform-origin:0 0">Вставить <span style="text-decoration:underline">ф</span>ункцию...</div>
</body></html>
